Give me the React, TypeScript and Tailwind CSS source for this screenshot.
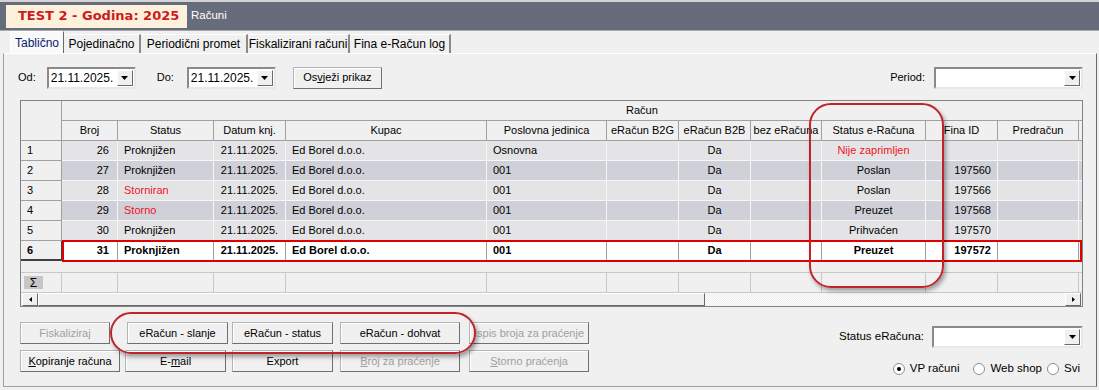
import React from "react";

type Col = { label: string; w: string; cell: string };

const cols: Col[] = [
  { label: "Broj", w: "w-[56px]", cell: "justify-end pr-[8px]" },
  { label: "Status", w: "w-[96px]", cell: "justify-start pl-[6px]" },
  { label: "Datum knj.", w: "w-[72px]", cell: "justify-center" },
  { label: "Kupac", w: "w-[201px]", cell: "justify-start pl-[6px]" },
  { label: "Poslovna jedinica", w: "w-[120px]", cell: "justify-start pl-[6px]" },
  { label: "eRačun B2G", w: "w-[72px]", cell: "justify-center" },
  { label: "eRačun B2B", w: "w-[72px]", cell: "justify-center" },
  { label: "bez eRačuna", w: "w-[71px]", cell: "justify-center" },
  { label: "Status e-Računa", w: "w-[104px]", cell: "justify-center" },
  { label: "Fina ID", w: "w-[72px]", cell: "justify-end pr-[6px]" },
  { label: "Predračun", w: "w-[81px]", cell: "justify-center" },
  { label: "", w: "w-[80px]", cell: "justify-center" },
];

type Cell = string | { t: string; red: boolean };

const rows: Cell[][] = [
  ["26", "Proknjižen", "21.11.2025.", "Ed Borel d.o.o.", "Osnovna", "", "Da", "", { t: "Nije zaprimljen", red: true }, "", "", ""],
  ["27", "Proknjižen", "21.11.2025.", "Ed Borel d.o.o.", "001", "", "Da", "", "Poslan", "197560", "", ""],
  ["28", { t: "Storniran", red: true }, "21.11.2025.", "Ed Borel d.o.o.", "001", "", "Da", "", "Poslan", "197566", "", ""],
  ["29", { t: "Storno", red: true }, "21.11.2025.", "Ed Borel d.o.o.", "001", "", "Da", "", "Preuzet", "197568", "", ""],
  ["30", "Proknjižen", "21.11.2025.", "Ed Borel d.o.o.", "001", "", "Da", "", "Prihvaćen", "197570", "", ""],
  ["31", "Proknjižen", "21.11.2025.", "Ed Borel d.o.o.", "001", "", "Da", "", "Preuzet", "197572", "", ""],
];

const Arrow = () => (
  <svg width="7" height="4" viewBox="0 0 7 4">
    <path d="M0 0h7L3.5 4z" fill="#000" />
  </svg>
);

const Combo = ({ w, text }: { w: string; text?: string }) => (
  <div className={`${w} h-[22px] flex bg-white border-2 border-[#8a8a8a] border-r-[#e8e8e8] border-b-[#e8e8e8]`}>
    <div className="flex-1 flex items-center pl-[2px] text-[12px] whitespace-nowrap overflow-hidden">{text}</div>
    <div className="w-[16px] my-[1px] mr-[1px] flex items-center justify-center bg-[#f0f0f0] border border-white border-r-[#696969] border-b-[#696969]">
      <Arrow />
    </div>
  </div>
);

const Btn = ({ w, children, off }: { w: string; children: React.ReactNode; off?: boolean }) => (
  <div
    className={`${w} h-[22px] flex items-center justify-center bg-[#f0f0f0] border border-[#b4b4b4] border-r-[#6f6f6f] border-b-[#6f6f6f] shadow-[inset_1px_1px_0_#ffffff] ${off ? "text-[#a0a0a0]" : "text-black"}`}
  >
    {children}
  </div>
);

const Radio = ({ on, label }: { on?: boolean; label: string }) => (
  <div className="flex items-center">
    <div className="w-[12px] h-[12px] rounded-full border border-[#8e8f8f] bg-white flex items-center justify-center">
      {on && <div className="w-[4px] h-[4px] rounded-full bg-black" />}
    </div>
    <span className="ml-[5px] text-[11.5px]">{label}</span>
  </div>
);

export default function App() {
  return (
    <div className="relative w-[1099px] h-[390px] overflow-hidden bg-[#f0f0f0] font-['Liberation_Sans',Arial,sans-serif] text-[11px] text-black">
      {/* title bar */}
      <div className="h-[31px] bg-[#676c7a] border-t-2 border-t-[#d4d4d4] border-b border-b-[#a8a8a8] flex items-center">
        <div className="ml-[6px] h-[23px] w-[181px] bg-[#fdf1dd] flex items-center pl-[12px] font-['DejaVu_Sans',sans-serif] font-bold text-[13px] text-[#cc1b1b]">
          TEST 2 - Godina: 2025
        </div>
        <span className="ml-[4px] text-[11.5px] text-white">Računi</span>
      </div>

      {/* tabs */}
      <div className="h-[22px] flex items-end pl-[10px] text-[12px]">
        <div className="h-[22px] w-[54px] flex items-center justify-center bg-[#f9f9f9] border-l border-t border-white border-r border-r-[#696969] text-[#0a1a70]">
          Tablično
        </div>
        <div className="h-[19px] w-[77px] flex items-center justify-center border-t border-white border-r-2 border-r-[#8a8a8a]">Pojedinačno</div>
        <div className="h-[19px] w-[107px] flex items-center justify-center border-t border-white border-r-2 border-r-[#8a8a8a]">Periodični promet</div>
        <div className="h-[19px] w-[102px] flex items-center justify-center border-t border-white border-r-2 border-r-[#8a8a8a]">Fiskalizirani računi</div>
        <div className="h-[19px] w-[101px] flex items-center justify-center border-t border-white border-r-2 border-r-[#8a8a8a]">Fina e-Račun log</div>
      </div>

      {/* panel */}
      <div className="ml-[3px] w-[1094px] h-[334px] border border-[#a0a0a0] border-t-white border-r-[#696969] pl-[14px] pt-[12px]">
        {/* filters */}
        <div className="h-[23px] flex items-center">
          <span>Od:</span>
          <div className="ml-[11px]"><Combo w="w-[89px]" text="21.11.2025." /></div>
          <span className="ml-[21px]">Do:</span>
          <div className="ml-[13px]"><Combo w="w-[89px]" text="21.11.2025." /></div>
          <div className="ml-[17px]">
            <Btn w="w-[89px]">
              <span>Os<span className="underline">v</span>ježi prikaz</span>
            </Btn>
          </div>
          <span className="ml-auto">Period:</span>
          <div className="ml-[9px] mr-[13px]"><Combo w="w-[149px]" /></div>
        </div>

        {/* grid */}
        <div className="ml-[2px] mt-[11px] w-[1063px] h-[207px] border border-[#828282] bg-[#f0f0f0] flex flex-col overflow-hidden">
          <div className="flex h-[40px] shrink-0">
            <div className="w-[41px] shrink-0 border-r border-b border-[#a0a0a0]" />
            <div className="flex flex-col">
              <div className="h-[20px] border-b border-[#a0a0a0] flex items-center pl-[564px] w-[1100px]">Račun</div>
              <div className="h-[20px] flex">
                {cols.map((c, i) => (
                  <div key={i} className={`${c.w} shrink-0 border-r border-b border-[#a0a0a0] flex items-center justify-center whitespace-nowrap overflow-hidden`}>
                    {c.label}
                  </div>
                ))}
              </div>
            </div>
          </div>

          {rows.map((r, ri) => {
            const sel = ri === 5;
            const bg = sel ? "bg-white" : ri % 2 === 0 ? "bg-[#e4e4e6]" : "bg-[#cfd0d8]";
            return (
              <div key={ri} className="flex h-[20px] shrink-0">
                <div
                  className={`w-[41px] shrink-0 flex items-center pl-[6px] border-r border-b ${sel ? "font-bold border-r-[#404040] border-b-2 border-b-[#404040]" : "border-[#a0a0a0]"}`}
                >
                  {ri + 1}
                </div>
                <div className="relative flex">
                  {r.map((cell, ci) => {
                    const red = typeof cell !== "string" && cell.red;
                    const t = typeof cell === "string" ? cell : cell.t;
                    return (
                      <div
                        key={ci}
                        className={`${cols[ci].w} ${cols[ci].cell} ${bg} shrink-0 flex items-center whitespace-nowrap border-r border-b ${sel ? "border-[#a0a0a0] font-bold" : "border-[#f7f7f7]"} ${red ? "text-[#f0141e]" : ""}`}
                      >
                        {t}
                      </div>
                    );
                  })}
                  {sel && <div className="pointer-events-none absolute left-0 top-[-1px] w-[1020px] h-[22px] border-2 border-[#e00000]" />}
                </div>
              </div>
            );
          })}

          <div className="h-[11px] shrink-0" />

          {/* sum row */}
          <div className="flex h-[21px] shrink-0 border-t border-[#c8c8c8]">
            <div className="w-[41px] shrink-0 border-r border-b border-[#c8c8c8] flex items-center pl-[3px]">
              <div className="w-[19px] h-[13px] bg-[#c6c6c6] flex items-center justify-center text-[12px] leading-none">Σ</div>
            </div>
            {cols.map((c, i) => (
              <div key={i} className={`${c.w} shrink-0 border-r border-b border-[#c8c8c8]`} />
            ))}
          </div>

          {/* horizontal scrollbar */}
          <div className="flex h-[13px] shrink-0">
            <div className="w-[16px] ml-[1px] flex items-center justify-center bg-[#f0f0f0] border border-white border-r-[#696969] border-b-[#696969]">
              <svg width="3" height="5" viewBox="0 0 3 5"><path d="M3 0v5L0 2.5z" fill="#000" /></svg>
            </div>
            <div className="w-[667px] bg-[#f0f0f0] border border-white border-r-[#696969] border-b-[#696969]" />
            <div className="flex-1 bg-[repeating-conic-gradient(#ffffff_0_25%,#ececec_0_50%)] bg-[length:2px_2px]" />
            <div className="w-[16px] mr-[1px] flex items-center justify-center bg-[#f0f0f0] border border-white border-r-[#696969] border-b-[#696969]">
              <svg width="3" height="5" viewBox="0 0 3 5"><path d="M0 0v5L3 2.5z" fill="#000" /></svg>
            </div>
          </div>
        </div>

        {/* bottom */}
        <div className="mt-[15px] ml-[2px] flex">
          <div className="flex flex-col gap-[6px]">
            <div className="flex">
              <Btn w="w-[90px]" off>Fiskaliziraj</Btn>
              <div className="ml-[17px]"><Btn w="w-[101px]">eRačun - slanje</Btn></div>
              <div className="ml-[4px]"><Btn w="w-[101px]">eRačun - status</Btn></div>
              <div className="ml-[7px]"><Btn w="w-[120px]">eRačun - dohvat</Btn></div>
              <div className="ml-[9px]"><Btn w="w-[120px]" off>Ispis broja za praćenje</Btn></div>
            </div>
            <div className="flex">
              <Btn w="w-[100px]"><span><span className="underline">K</span>opiranje računa</span></Btn>
              <div className="ml-[5px]"><Btn w="w-[101px]"><span>E-<span className="underline">m</span>ail</span></Btn></div>
              <div className="ml-[6px]"><Btn w="w-[101px]">Export</Btn></div>
              <div className="ml-[7px]"><Btn w="w-[120px]" off><span><span className="underline">B</span>roj za praćenje</span></Btn></div>
              <div className="ml-[9px]"><Btn w="w-[120px]" off><span><span className="underline">S</span>torno praćenja</span></Btn></div>
            </div>
          </div>

          <div className="ml-auto mr-[13px] pt-[4px] flex flex-col items-end">
            <div className="flex items-center">
              <span className="text-[11.5px]">Status eRačuna:</span>
              <div className="ml-[8px]"><Combo w="w-[151px]" /></div>
            </div>
            <div className="mt-[12px] mr-[3px] flex items-center">
              <Radio on label="VP računi" />
              <div className="ml-[14px]"><Radio label="Web shop" /></div>
              <div className="ml-[5px]"><Radio label="Svi" /></div>
            </div>
          </div>
        </div>
      </div>

      {/* red annotation marks */}
      <div className="pointer-events-none absolute left-[809px] top-[103px] w-[135px] h-[185px] rounded-[22px] border-2 border-[#c1232b] shadow-[2px_3px_4px_rgba(0,0,0,0.35)]" />
      <div className="pointer-events-none absolute left-[110px] top-[312px] w-[366px] h-[42px] rounded-[22px] border-2 border-[#c1232b] shadow-[2px_3px_4px_rgba(0,0,0,0.35)]" />
    </div>
  );
}
